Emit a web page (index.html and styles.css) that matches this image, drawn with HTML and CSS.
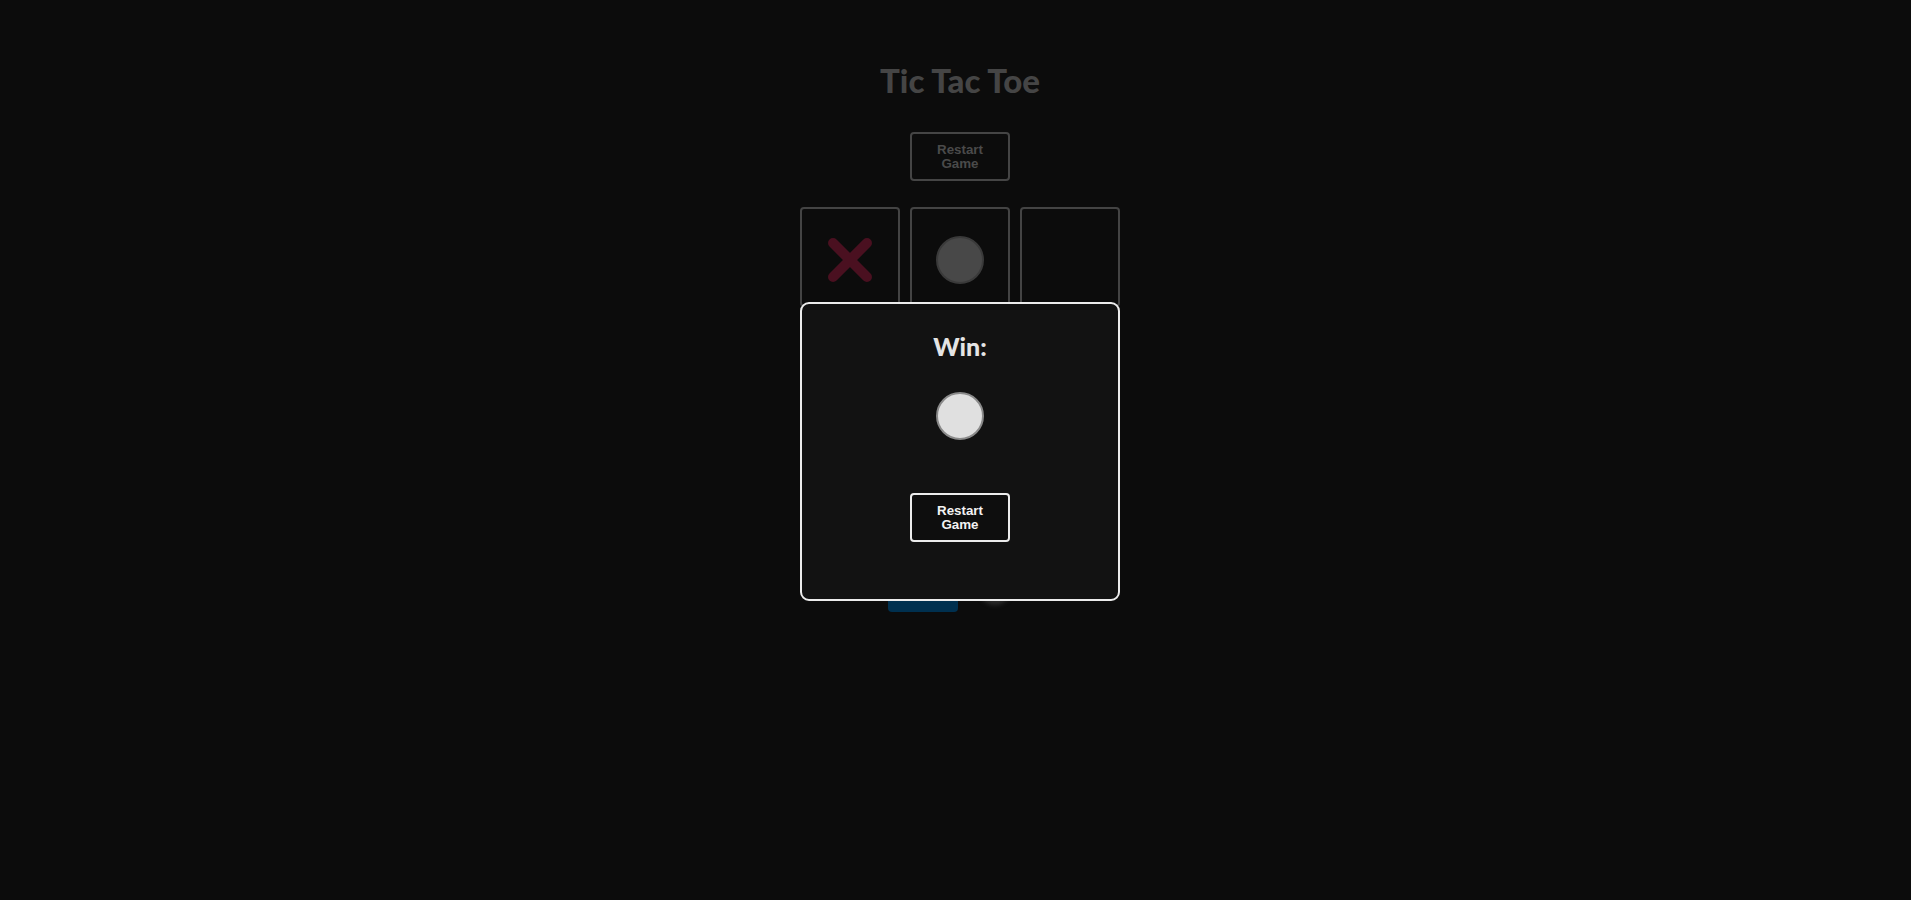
FILE: index.html
```html
<!DOCTYPE html>
<html lang="en">
<head>
<meta charset="utf-8">
<title>Tic Tac Toe</title>
<link rel="stylesheet" href="styles.css">
</head>
<body>
<main class="game">
  <h1 class="title">Tic Tac Toe</h1>
  <button class="restart restart--dim">Restart Game</button>
  <div class="board">
    <div class="cell"><span class="mark-x"></span></div>
    <div class="cell"><span class="mark-o"></span></div>
    <div class="cell"></div>
    <div class="cell"></div>
    <div class="cell"></div>
    <div class="cell"></div>
    <div class="cell"></div>
    <div class="cell"></div>
    <div class="cell"></div>
  </div>
  <div class="players">
    <div class="player player--active"><span class="dot"></span><span class="dot"></span></div>
    <div class="player-o"></div>
  </div>
</main>
<div class="overlay">
  <div class="modal">
    <h2 class="modal-title">Win:</h2>
    <span class="winner-o"></span>
    <button class="restart restart--bright">Restart Game</button>
  </div>
</div>
</body>
</html>
```
FILE: styles.css
```css
html, body {
  margin: 0;
  height: 100%;
}
body {
  background: #0c0c0c;
  padding-left: 9px;
  font-family: "Lato", "Noto Sans", sans-serif;
}
.game {
  display: flex;
  flex-direction: column;
  align-items: center;
}
.title {
  margin: 60px 0 0;
  font-size: 33px;
  line-height: 40px;
  font-weight: 900;
  color: #454545;
}
.restart {
  box-sizing: border-box;
  width: 100px;
  height: 49px;
  padding: 0 18px;
  background: transparent;
  border: 2px solid;
  border-radius: 4px;
  font-family: "Liberation Sans", Arial, sans-serif;
  font-size: 13.33px;
  font-weight: 700;
  line-height: 14px;
}
.restart--dim {
  margin-top: 32px;
  color: #4a4a4a;
  border-color: #454545;
}
.restart--bright {
  color: #f2f2f2;
  border-color: #ececec;
  background: #0e0e0e;
}
.board {
  margin-top: 26px;
  display: grid;
  grid-template-columns: repeat(3, 100px);
  grid-auto-rows: 100px;
  gap: 10px;
}
.cell {
  box-sizing: border-box;
  border: 2px solid #444;
  border-radius: 4px;
  display: flex;
  align-items: center;
  justify-content: center;
  padding-top: 6px;
}
.mark-x {
  position: relative;
  width: 47px;
  height: 47px;
}
.mark-x::before,
.mark-x::after {
  content: "";
  position: absolute;
  left: 50%;
  top: 50%;
  width: 58px;
  height: 10px;
  margin: -5px 0 0 -29px;
  border-radius: 5px;
  background: #4a1020;
  transform: rotate(45deg);
}
.mark-x::after {
  transform: rotate(-45deg);
}
.mark-o {
  box-sizing: border-box;
  width: 48px;
  height: 48px;
  border-radius: 50%;
  background: #484848;
  border: 2px solid #3a3a3a;
}
.players {
  margin-top: 35px;
  padding-right: 20px;
  display: flex;
  align-items: center;
  gap: 20px;
}
.player {
  width: 70px;
  height: 50px;
  border-radius: 4px;
  background: #00304f;
  display: flex;
  align-items: flex-start;
  justify-content: space-around;
}
.dot {
  width: 8px;
  height: 8px;
  border-radius: 50%;
  background: #4a1020;
}
.player-o {
  width: 34px;
  height: 34px;
  margin-top: 2px;
  border-radius: 50%;
  background: #2a2a2a;
  filter: blur(2px);
}
.overlay {
  position: fixed;
  inset: 0;
  padding-left: 9px;
  display: flex;
  align-items: center;
  justify-content: center;
}
.modal {
  box-sizing: border-box;
  width: 320px;
  height: 299px;
  margin-top: 3px;
  background: #121212;
  border: 2px solid #ececec;
  border-radius: 9px;
  display: flex;
  flex-direction: column;
  align-items: center;
}
.modal-title {
  margin: 27px 0 0;
  font-size: 25px;
  line-height: 30px;
  font-weight: 900;
  color: #e4e4e4;
}
.winner-o {
  box-sizing: border-box;
  margin-top: 31px;
  width: 48px;
  height: 48px;
  border-radius: 50%;
  background: #e0e0e0;
  border: 2px solid #8a8a8a;
}
.restart--bright {
  margin-top: 53px;
}
```
